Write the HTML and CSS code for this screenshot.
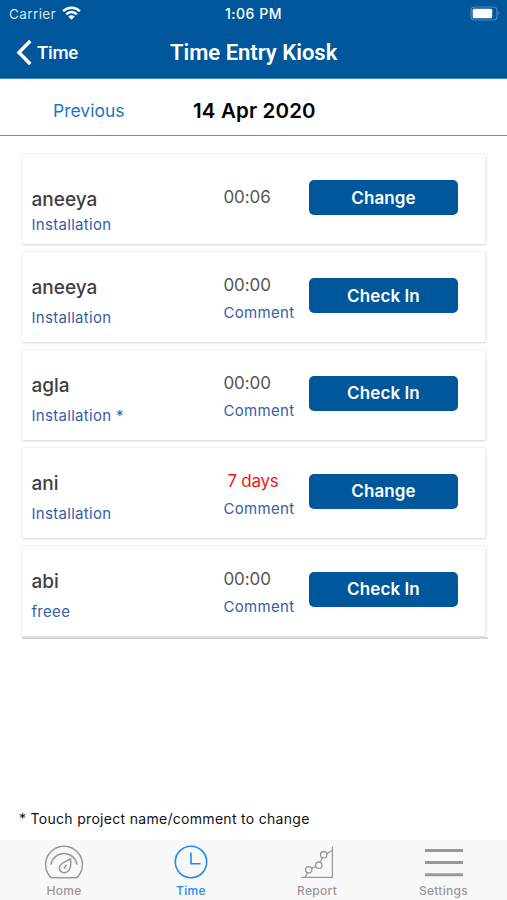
FILE: index.html
```
<!DOCTYPE html>
<html lang="en">
<head>
<meta charset="utf-8">
<title>Time Entry Kiosk</title>
<link rel="stylesheet" href="styles.css">
</head>
<body>
<div class="app">
  <header class="header">
    <div class="status">
      <span class="carrier">Carrier</span>
      <svg class="wifi" width="19" height="14" viewBox="0 0 19 14"><g fill="none" stroke="#fff" stroke-width="2.5"><path d="M1.100 5.100a12 12 0 0 1 16.800 0"/><path d="M4.200 8.300a7.500 7.500 0 0 1 10.600 0"/></g><path d="M6.300 10.500a4.500 4.500 0 0 1 6.400 0L9.500 13.800z" fill="#fff"/></svg>
      <span class="clock">1:06 PM</span>
      <svg class="battery" width="31" height="15" viewBox="0 0 31 15"><rect x="1" y="1" width="26" height="13" rx="3.500" fill="none" stroke="#4f8abb" stroke-width="1.200"/><rect x="2.700" y="2.700" width="19.500" height="9.600" rx="1.500" fill="#fff"/><path d="M28.700 5q1.800 2.300 0 4.800z" fill="#6297c4"/></svg>
    </div>
    <div class="nav">
      <a class="back"><svg width="16" height="27" viewBox="0 0 16 27"><path d="M14.300 2 3 13.500 14.300 25" fill="none" stroke="#fff" stroke-width="3.500"/></svg><span>Time</span></a>
      <h1 class="title">Time Entry Kiosk</h1>
    </div>
  </header>
  <div class="datebar">
    <a class="previous">Previous</a>
    <span class="date">14 Apr 2020</span>
  </div>
  <main class="list">
    <article class="card first">
      <div class="who"><div class="name">aneeya</div><a class="link">Installation</a></div>
      <div class="time"><div class="hours">00:06</div></div>
      <button class="btn">Change</button>
    </article>
    <article class="card">
      <div class="who"><div class="name">aneeya</div><a class="link">Installation</a></div>
      <div class="time"><div class="hours">00:00</div><a class="link">Comment</a></div>
      <button class="btn">Check In</button>
    </article>
    <article class="card">
      <div class="who"><div class="name">agla</div><a class="link">Installation *</a></div>
      <div class="time"><div class="hours">00:00</div><a class="link">Comment</a></div>
      <button class="btn">Check In</button>
    </article>
    <article class="card">
      <div class="who"><div class="name">ani</div><a class="link">Installation</a></div>
      <div class="time"><div class="hours late">7 days</div><a class="link">Comment</a></div>
      <button class="btn">Change</button>
    </article>
    <article class="card">
      <div class="who"><div class="name">abi</div><a class="link">freee</a></div>
      <div class="time"><div class="hours">00:00</div><a class="link">Comment</a></div>
      <button class="btn">Check In</button>
    </article>
  </main>
  <div class="list-end"></div>
  <p class="note">* Touch project name/comment to change</p>
  <nav class="tabs">
    <a class="tab">
      <svg width="40" height="34" viewBox="0 0 40 34" fill="none" stroke="currentColor" stroke-width="1.500"><path d="M6 31.500A18.400 18.400 0 1 1 34 31.500Q33.300 32.700 32 32.700H8Q6.700 32.700 6 31.500z"/><path d="M7 19.500a13.200 13.200 0 0 1 26 0"/><path d="M26.500 14q1.500 8.500-2.500 12.300c-4 3.500-9.500.2-8.500-4.400 1-4 6-5.300 11-7.900z"/><path d="M20 23.500 22.500 20"/></svg>
      <span>Home</span>
    </a>
    <a class="tab active">
      <svg width="34" height="34" viewBox="0 0 34 34" fill="none" stroke="currentColor" stroke-width="1.600"><circle cx="17" cy="17" r="15.700"/><path d="M17 7.500V18.800H26.500"/></svg>
      <span>Time</span>
    </a>
    <a class="tab">
      <svg width="34" height="34" viewBox="0 0 34 34" fill="none" stroke="currentColor" stroke-width="1.300"><path d="M1 32.400H32.400V1.500"/><path d="M5.200 32 7.300 28M11.800 23.300 15.200 21.700M19.800 17.500 22.700 12.800M26.700 8.700 32 5.500"/><circle cx="8.700" cy="24.800" r="3.200"/><circle cx="18.800" cy="20.200" r="3.200"/><circle cx="23.700" cy="9.700" r="3.200"/></svg>
      <span>Report</span>
    </a>
    <a class="tab">
      <svg width="38" height="32" viewBox="0 0 38 32"><path d="M0 3.500H38M0 15.600H38M0 27.800H38" stroke="currentColor" stroke-width="3"/></svg>
      <span>Settings</span>
    </a>
  </nav>
</div>
</body>
</html>
```

FILE: styles.css
```
* { box-sizing: border-box; }
body { margin: 0; background: #fff; font-family: Inter, "Liberation Sans", sans-serif; color: #000; }
.app { width: 507px; height: 900px; display: flex; flex-direction: column; overflow: hidden; white-space: nowrap; }
.header { height: 79px; background: #00579c; color: #fff; border-bottom: 1px solid #3b87c0; }
.status { height: 27px; display: grid; grid-template-columns: 53px 114px 1fr 37px; align-items: center; padding-left: 9px; font-size: 13.5px; }
.carrier { color: #d5e4f1; letter-spacing: .4px; }
.wifi { margin-top: -2px; }
.clock { padding-left: 49px; font-weight: 500; font-size: 14px; letter-spacing: .5px; }
.nav { height: 51px; display: grid; grid-template-columns: 170px 1fr; align-items: center; font-family: Roboto, sans-serif; }
.back { display: flex; align-items: center; gap: 5px; padding-left: 16px; font-size: 18.5px; font-weight: 500; letter-spacing: -.3px; }
.back span { padding-top: 1px; }
.title { margin: 0; font-size: 22px; line-height: 26px; font-weight: 600; }
.datebar { height: 57px; border-bottom: 1px solid #888; display: grid; grid-template-columns: 193px 1fr; align-items: center; padding-top: 6px; }
.previous { padding-left: 53px; font-size: 17.5px; color: #1a78b8; }
.date { font-size: 20.5px; font-weight: 600; letter-spacing: .15px; }
.list { padding: 17.4px 21px 0; display: flex; flex-direction: column; gap: 5.8px; }
.card { height: 92px; border: 1px solid #f0f0f0; border-bottom-color: #e2e2e2; border-radius: 3px; box-shadow: 1px 1px 2px #eee; display: grid; grid-template-columns: 192px 85px 150px; padding-left: 9.5px; }
.who { padding-top: 24px; }
.name { font-size: 19px; line-height: 24px; font-weight: 500; color: #404040; margin-bottom: 8px; }
.link { display: block; font-size: 15px; line-height: 20px; letter-spacing: .3px; color: #3560a5; }
.first .name { margin-bottom: 3px; }
.first .who { padding-top: 34px; }
.time { padding-top: 22px; }
.first .time { padding-top: 32px; }
.hours { font-size: 17px; line-height: 22px; margin-bottom: 7px; letter-spacing: -.1px; color: #555; }
.late { color: #f01818; padding-left: 4px; letter-spacing: -.3px; }
.btn { width: 149px; height: 35px; margin: 26px 0 0 .5px; padding: 0; border: 0; border-radius: 5px; background: #00579c; color: #fff; font: 600 17px Inter, sans-serif; letter-spacing: .1px; }
.list-end { height: 2px; margin: 0 19px 0 22px; background: #d5d5d5; }
.note { margin: auto 0 11px 19px; font-size: 14px; line-height: 20px; letter-spacing: .3px; color: #111; }
.tabs { height: 60px; flex: none; background: #f8f8f8; display: grid; grid-template-columns: 128px 126px 126px 127px; }
.tab { display: flex; flex-direction: column; align-items: center; justify-content: flex-end; color: #999; font-size: 12px; font-weight: 500; letter-spacing: .3px; padding-bottom: 2px; }
.tab svg { margin-bottom: 4px; }
.tab span { line-height: 15px; }
.active { color: #2389f5; }
```
